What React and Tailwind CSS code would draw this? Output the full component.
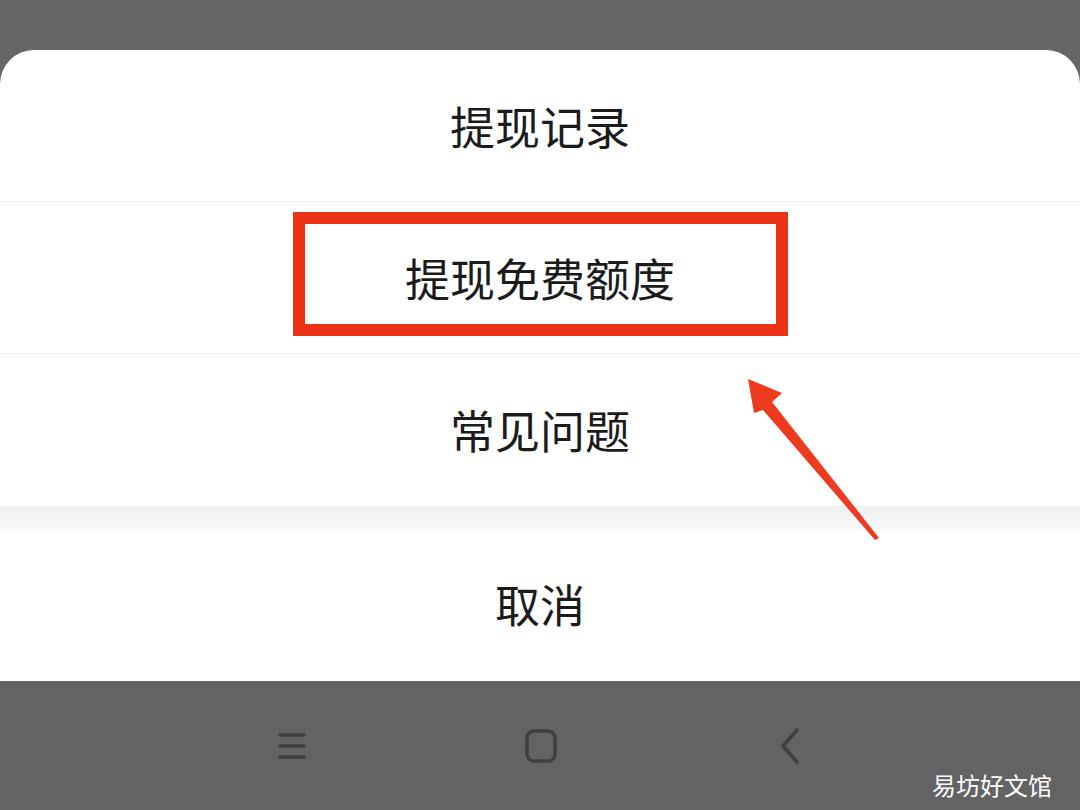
import React from "react";

const font = { fontFamily: '"Noto Sans CJK SC", "Noto Sans", sans-serif' };

const Row = ({ children, divider = true }) => (
  <div
    className={`h-[152px] flex items-center justify-center text-[45px] text-[#1b1b1b] ${
      divider ? "border-b border-[#ececec]" : ""
    }`}
  >
    {children}
  </div>
);

const Arrow = () => (
  <svg
    className="absolute left-[740px] top-[370px]"
    width="150"
    height="180"
    viewBox="740 370 150 180"
  >
    <polygon points="748,379 782,393 772,402 879,538 875,540 763,410 754,413" fill="#ee3a1e" />
  </svg>
);

export default function App() {
  return (
    <div className="relative w-[1080px] h-[810px] bg-[#666666] overflow-hidden" style={font}>
      <div className="h-[50px]" />
      <div className="bg-white rounded-t-[34px] overflow-hidden">
        <Row>提现记录</Row>
        <Row>提现免费额度</Row>
        <Row divider={false}>常见问题</Row>
        <div className="h-[25px] bg-gradient-to-b from-[#efefef] to-[#fafafa]" />
        <div className="h-[150px] flex items-center justify-center text-[45px] text-[#1b1b1b] pb-[4px]">
          取消
        </div>
      </div>
      <div className="h-[130px] bg-[#636363] relative">
        <div className="flex items-center justify-around h-[130px] pl-[168px] pr-[166px]">
          <svg width="34" height="34" viewBox="0 0 34 34">
            <g stroke="#3f3f3f" strokeWidth="3.5" strokeLinecap="round">
              <line x1="5" y1="6" x2="29" y2="6" />
              <line x1="5" y1="17" x2="29" y2="17" />
              <line x1="5" y1="28" x2="29" y2="28" />
            </g>
          </svg>
          <svg width="36" height="36" viewBox="0 0 36 36">
            <rect x="4" y="3" width="28" height="30" rx="7" fill="none" stroke="#3f3f3f" strokeWidth="3.5" />
          </svg>
          <svg width="34" height="40" viewBox="0 0 34 40">
            <polyline points="24,4 10,20 24,36" fill="none" stroke="#3f3f3f" strokeWidth="3.5" strokeLinecap="round" strokeLinejoin="round" />
          </svg>
        </div>
        <div className="absolute right-[28px] bottom-[14px] text-[24px] text-white leading-none">
          易坊好文馆
        </div>
      </div>
      <div className="absolute left-[293px] top-[212px] w-[495px] h-[124px] border-[12px] border-[#ec3317]" />
      <Arrow />
    </div>
  );
}
